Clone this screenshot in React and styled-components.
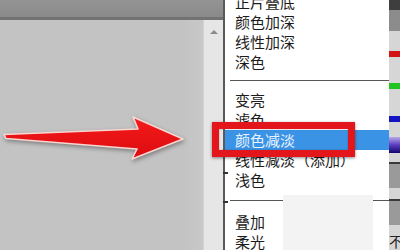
import React from 'react';
import styled, { createGlobalStyle } from 'styled-components';

const GlobalStyle = createGlobalStyle`
	html, body {
		margin: 0;
		padding: 0;
		overflow: hidden;
	}
	body {
		font-family: "Noto Sans CJK SC", "Noto Sans", sans-serif;
	}
`;

const Screen = styled.div`
	position: relative;
	width: 400px;
	height: 250px;
	display: flex;
	flex-direction: row;
	overflow: hidden;
	background: #c4c4c4;
`;

const LeftPane = styled.div`
	width: 223px;
	display: flex;
	flex-direction: column;
`;

const TopBar = styled.div`
	height: 17px;
	background: linear-gradient(#949494, #8a8a8a);
	border-bottom: 3px solid #727272;
`;

const PaneBody = styled.div`
	flex: 1;
	display: flex;
	flex-direction: row;
`;

const Canvas = styled.div`
	flex: 1;
	background: linear-gradient(90deg, #c3c3c3 90%, #c8c8c8);
`;

const ScrollStrip = styled.div`
	width: 19px;
	background: #e6e6e6;
	border-left: 1px solid #d4d4d4;
	display: flex;
	justify-content: center;
	padding-top: 10px;
`;

const UpArrow = styled.div`
	width: 0;
	height: 0;
	border-left: 4px solid transparent;
	border-right: 4px solid transparent;
	border-bottom: 4px solid #8c8c8c;
`;

const Menu = styled.div`
	position: relative;
	width: 164px;
	background: #ffffff;
	border-left: 2px solid #5a5a5a;
	display: flex;
	flex-direction: column;
	padding-top: 0;
	margin-top: 0;
`;

const Tick = styled.div`
	position: absolute;
	left: -2px;
	top: ${p => p.top}px;
	width: 5px;
	height: 2px;
	background: #333;
`;

const List = styled.div`
	margin-top: -8px;
	display: flex;
	flex-direction: column;
`;

const Item = styled.div`
	height: 20px;
	line-height: 20px;
	padding-left: 10px;
	font-size: 15px;
	white-space: nowrap;
	color: ${p => (p.active ? '#e6f2ff' : '#1c1c1c')};
	background: ${p => (p.active ? '#3b93e6' : 'transparent')};
`;

const Separator = styled.div`
	height: ${p => p.h}px;
	display: flex;
	align-items: flex-start;
	padding-left: 5px;

	&::after {
		content: '';
		display: block;
		width: 100%;
		height: 1px;
		margin-top: ${p => p.line}px;
		background: #555;
	}
`;

const Swatches = styled.div`
	width: 11px;
	display: flex;
	flex-direction: column;
	background: #d6d6d6;
`;

const Stripe = styled.div`
	height: ${p => p.h}px;
	background: ${p => p.c || '#d6d6d6'};
	flex-shrink: 0;
`;

const StripLabel = styled.div`
	font-size: 14px;
	line-height: 16px;
	color: #222;
	padding-top: 8px;
	white-space: nowrap;
`;

const HighlightBox = styled.div`
	position: absolute;
	left: 212px;
	top: 122px;
	width: 143px;
	height: 35px;
	box-sizing: border-box;
	border: 7px solid #e3161c;
	box-shadow: 0 1px 3px rgba(0, 0, 0, 0.45), inset 0 0 2px rgba(0, 0, 0, 0.3);
`;

const Cover = styled.div`
	position: absolute;
	left: 283px;
	top: 195px;
	width: 90px;
	height: 55px;
	background: #f3f3f3;
`;

const ArrowLayer = styled.svg`
	position: absolute;
	left: 0;
	top: 110px;
	filter: drop-shadow(1px 2px 2px rgba(0, 0, 0, 0.35));
`;

const items = [
	{ t: '正片叠底' },
	{ t: '颜色加深' },
	{ t: '线性加深' },
	{ t: '深色' },
	{ sep: 18, line: 8 },
	{ t: '变亮' },
	{ t: '滤色' },
	{ t: '颜色减淡', active: true },
	{ t: '线性减淡（添加）' },
	{ t: '浅色' },
	{ sep: 22, line: 10 },
	{ t: '叠加' },
	{ t: '柔光' },
];

const stripes = [
	{ h: 10, c: '#3e3e3e' },
	{ h: 21, c: '#8c8c8c' },
	{ h: 20 },
	{ h: 6, c: '#d21414' },
	{ h: 26 },
	{ h: 6, c: '#22c422' },
	{ h: 27 },
	{ h: 6, c: '#1414c4' },
	{ h: 15 },
	{ h: 16, c: 'linear-gradient(#b8a8e8, #5a3cc0 50%, #12066e)' },
	{ h: 9 },
	{ h: 2, c: '#3a3a3a' },
	{ h: 24, c: '#9a9a9a' },
	{ h: 11 },
	{ h: 2, c: '#3a3a3a' },
	{ h: 24, c: '#9a9a9a' },
];

const App = () => {
	return (
		<Screen>
			<GlobalStyle />
			<LeftPane>
				<TopBar />
				<PaneBody>
					<Canvas />
					<ScrollStrip>
						<UpArrow />
					</ScrollStrip>
				</PaneBody>
			</LeftPane>
			<Menu>
				<Tick top={172} />
				<Tick top={201} />
				<List>
					{items.map((it, i) =>
						it.sep ? (
							<Separator key={i} h={it.sep} line={it.line} />
						) : (
							<Item key={i} active={it.active}>{it.t}</Item>
						)
					)}
				</List>
			</Menu>
			<Swatches>
				{stripes.map((s, i) => (
					<Stripe key={i} h={s.h} c={s.c} />
				))}
				<StripLabel>不</StripLabel>
			</Swatches>

			<Cover />
			<HighlightBox />
			<ArrowLayer width="200" height="60" viewBox="0 110 200 60">
				<defs>
					<linearGradient id="redFill" x1="0" y1="0" x2="0" y2="1">
						<stop offset="0" stopColor="#f41a1a" />
						<stop offset="1" stopColor="#dc0c10" />
					</linearGradient>
				</defs>
				<polygon
					points="4,134.5 138,129 133,117 183,139 132,159 137,149 6,138.5"
					fill="url(#redFill)"
					stroke="#f8d6d2"
					strokeWidth="1.6"
					strokeLinejoin="round"
				/>
			</ArrowLayer>
		</Screen>
	);
};

export default App;
